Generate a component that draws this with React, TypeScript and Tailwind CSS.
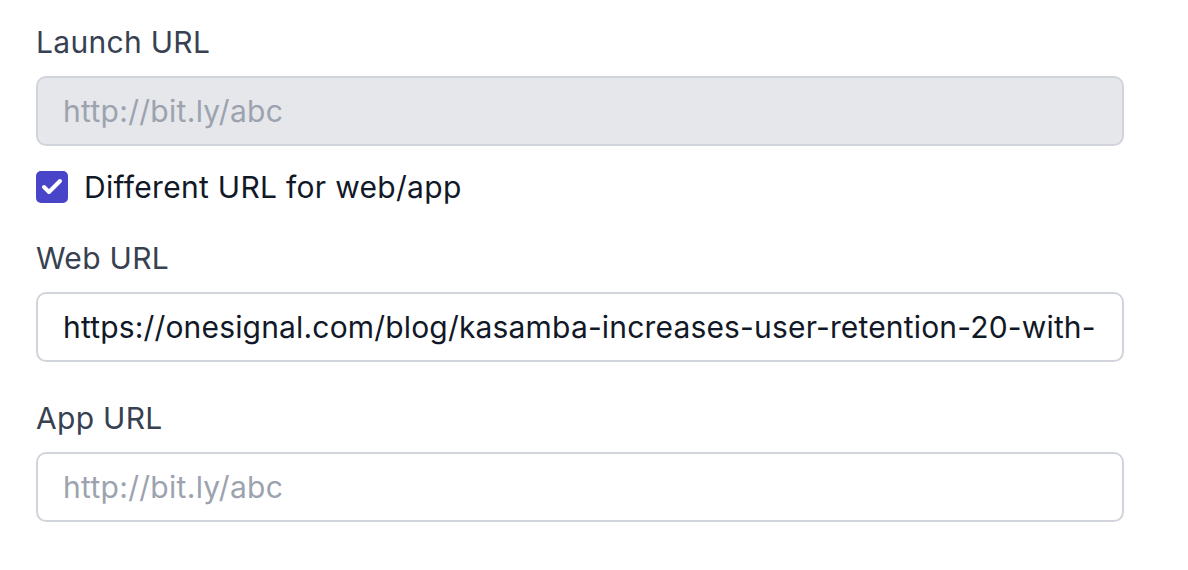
import { Check } from "lucide-react";

const font = { fontFamily: "Inter, 'Noto Sans', sans-serif" };

function FieldLabel({ children }: { children: string }) {
  return (
    <label className="block text-[30px] leading-[40px] tracking-[0.3px] text-[#374151] mb-[14px]">
      {children}
    </label>
  );
}

export default function App() {
  return (
    <div className="w-[1188px] h-[570px] bg-white" style={font}>
      <div className="pt-[22px] pl-[36px] w-[1124px]">
        {/* Launch URL */}
        <FieldLabel>Launch URL</FieldLabel>
        <input
          disabled
          placeholder="http://bit.ly/abc"
          className="block w-full h-[70px] px-[25px] rounded-[10px] border-2 border-[#d1d5db] bg-[#e5e7eb] text-[30px] tracking-[0.3px] text-[#111827] placeholder:text-[#9ca3af] outline-none"
        />

        {/* Checkbox */}
        <div className="flex items-center gap-[16px] mt-[25px] h-[32px]">
          <span className="flex items-center justify-center w-[32px] h-[32px] rounded-[5px] bg-[#4845c8]">
            <Check className="w-[24px] h-[24px] text-white" strokeWidth={4} />
          </span>
          <span className="text-[30px] leading-[40px] tracking-[0.3px] text-[#111827]">
            Different URL for web/app
          </span>
        </div>

        {/* Web URL */}
        <div className="mt-[35px]">
          <FieldLabel>Web URL</FieldLabel>
          <input
            readOnly
            value="https://onesignal.com/blog/kasamba-increases-user-retention-20-with-push-notifications/"
            className="block w-full h-[70px] px-[25px] rounded-[10px] border-2 border-[#d1d5db] bg-white text-[30px] tracking-[0.17px] text-[#111827] outline-none"
          />
        </div>

        {/* App URL */}
        <div className="mt-[36px]">
          <FieldLabel>App URL</FieldLabel>
          <input
            placeholder="http://bit.ly/abc"
            className="block w-full h-[70px] px-[25px] rounded-[10px] border-2 border-[#d1d5db] bg-white text-[30px] tracking-[0.3px] text-[#111827] placeholder:text-[#9ca3af] outline-none"
          />
        </div>
      </div>
    </div>
  );
}
